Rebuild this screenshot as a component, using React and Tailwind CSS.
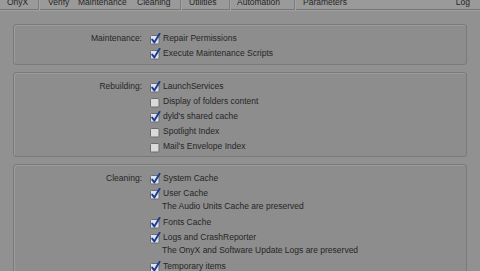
import React from "react";

const font = { fontFamily: '"Liberation Sans", Arial, sans-serif' };

const Check = ({ on }) => (
  <svg width="11" height="12" viewBox="0 0 11 12" className="shrink-0">
    <rect
      x="0.5"
      y="2.5"
      width="8.5"
      height="8.5"
      rx="1"
      fill={on ? "#dfe5f2" : "#d9d9d9"}
      stroke="#6c6c6c"
    />
    {on && (
      <path
        d="M2.2 6.6 L4.3 9.4 L9.6 0.8"
        fill="none"
        stroke="#1d3a8f"
        strokeWidth="1.9"
        strokeLinecap="round"
        strokeLinejoin="round"
      />
    )}
  </svg>
);

const Row = ({ on, children }) => (
  <div className="flex h-[15px] items-center gap-[2px] whitespace-nowrap">
    <Check on={on} />
    <span>{children}</span>
  </div>
);

const Note = ({ children }) => (
  <div className="mb-[3px] h-[11px] whitespace-nowrap pl-[12px] leading-[11px]">
    {children}
  </div>
);

const Group = ({ label, className, children }) => (
  <div
    className={
      "mx-[13px] rounded-[3px] border border-[#7a7a7a] bg-[#8d8d8d] shadow-[inset_1px_1px_0_#9c9c9c] " +
      className
    }
  >
    <div className="flex">
      <div className="h-[15px] w-[128px] text-right leading-[15px]">{label}</div>
      <div className="ml-[8px] flex flex-col">{children}</div>
    </div>
  </div>
);

const Sep = () => <div className="h-[10px] w-px bg-[#7c7c7c] shadow-[1px_0_0_#a4a4a4]" />;

export default function App() {
  return (
    <div
      className="h-[271px] w-[480px] overflow-hidden bg-[#919191] text-[8.5px] text-[#262626]"
      style={font}
    >
      {/* toolbar */}
      <div className="flex h-[10px] items-start border-b border-[#767676] bg-[#9a9a9a] leading-[8px] whitespace-nowrap">
        <span className="-mt-[2px] ml-[7px] w-[31px]">OnyX</span>
        <Sep />
        <span className="-mt-[2px] ml-[9px] w-[30px]">Verify</span>
        <span className="-mt-[2px] w-[59px]">Maintenance</span>
        <span className="-mt-[2px] w-[43px]">Cleaning</span>
        <Sep />
        <span className="-mt-[2px] ml-[8px] w-[40px]">Utilities</span>
        <Sep />
        <span className="-mt-[2px] ml-[7px] w-[57px]">Automation</span>
        <Sep />
        <span className="-mt-[2px] ml-[8px]">Parameters</span>
        <span className="-mt-[2px] ml-auto mr-[10px]">Log</span>
      </div>
      <div className="h-px bg-[#9e9e9e]" />

      <Group label="Maintenance:" className="mt-[13px] pt-[6px] pb-[3px]">
        <Row on>Repair Permissions</Row>
        <Row on>Execute Maintenance Scripts</Row>
      </Group>

      <Group label="Rebuilding:" className="mt-[7px] pt-[6px] pb-[2px]">
        <Row on>LaunchServices</Row>
        <Row>Display of folders content</Row>
        <Row on>dyld's shared cache</Row>
        <Row>Spotlight Index</Row>
        <Row>Mail's Envelope Index</Row>
      </Group>

      <Group label="Cleaning:" className="mt-[7px] pt-[6px] pb-[6px]">
        <Row on>System Cache</Row>
        <Row on>User Cache</Row>
        <Note>The Audio Units Cache are preserved</Note>
        <Row on>Fonts Cache</Row>
        <Row on>Logs and CrashReporter</Row>
        <Note>The OnyX and Software Update Logs are preserved</Note>
        <Row on>Temporary items</Row>
        <Row on>Recent Items</Row>
      </Group>
    </div>
  );
}
